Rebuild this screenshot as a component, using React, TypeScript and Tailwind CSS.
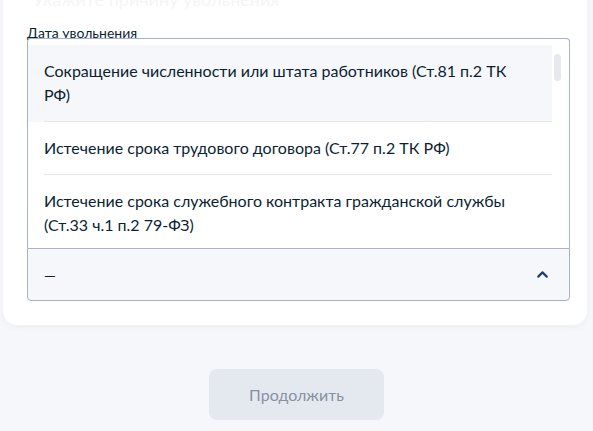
import { ChevronUp } from "lucide-react";

const reasons = [
  "Сокращение численности или штата работников (Ст.81 п.2 ТК РФ)",
  "Истечение срока трудового договора (Ст.77 п.2 ТК РФ)",
  "Истечение срока служебного контракта гражданской службы (Ст.33 ч.1 п.2 79-ФЗ)",
];

const App = () => {
  return (
    <div className="h-[431px] overflow-hidden bg-[#f5f7fa] font-['Lato','Noto_Sans',sans-serif] text-[#0b1f33]">
      {/* Form card */}
      <div className="ml-[3px] w-[584px] rounded-b-[14px] bg-white pb-[24px] pl-[24px] pr-[17px] shadow-[0_2px_8px_rgba(11,31,51,0.04)]">
        <p className="-mt-[10px] pl-[6px] text-[18px] leading-[18px] text-[#f4f5f8]">Укажите причину увольнения</p>
        <label className="mt-[17px] block text-[14px] leading-[16px]">Дата увольнения</label>
        <div className="mt-[8px] h-[48px] rounded-[4px] border border-[#c9d0dc]" />

        {/* Select, opened upward */}
        <div className="relative mt-[151px]">
          <div className="absolute bottom-full left-0 right-0 h-[210px] overflow-hidden rounded-t-[4px] border border-b-0 border-[#a9b1cf] bg-white pt-[6px]">
            <ul className="mr-[17px]">
              {reasons.map((r, i) => (
                <li key={r} className={i === 0 ? "bg-[#f5f7fa] pl-[16px]" : "pl-[16px]"}>
                  <div className="border-b border-[#e3e7ee] py-[14px] pr-[24px] text-[16px] leading-[24px]">{r}</div>
                </li>
              ))}
            </ul>
            <div className="absolute right-[8px] top-[15px] h-[27px] w-[7px] rounded-full bg-[#e5e8ed]" />
          </div>
          <div className="flex h-[53px] items-center justify-between rounded-b-[4px] border border-[#a9b1cf] bg-[#f5f7fa] pl-[16px] pr-[18px]">
            <span className="text-[15px] leading-[24px]">—</span>
            <ChevronUp className="h-[17px] w-[17px] text-[#233c6e]" strokeWidth={3} />
          </div>
        </div>
      </div>

      {/* Action */}
      <div className="mt-[44px] flex justify-center">
        <button className="h-[51px] w-[175px] rounded-[8px] bg-[#e4e8ef] text-[16px] text-[#88919f]">
          Продолжить
        </button>
      </div>
    </div>
  );
};

export default App;
